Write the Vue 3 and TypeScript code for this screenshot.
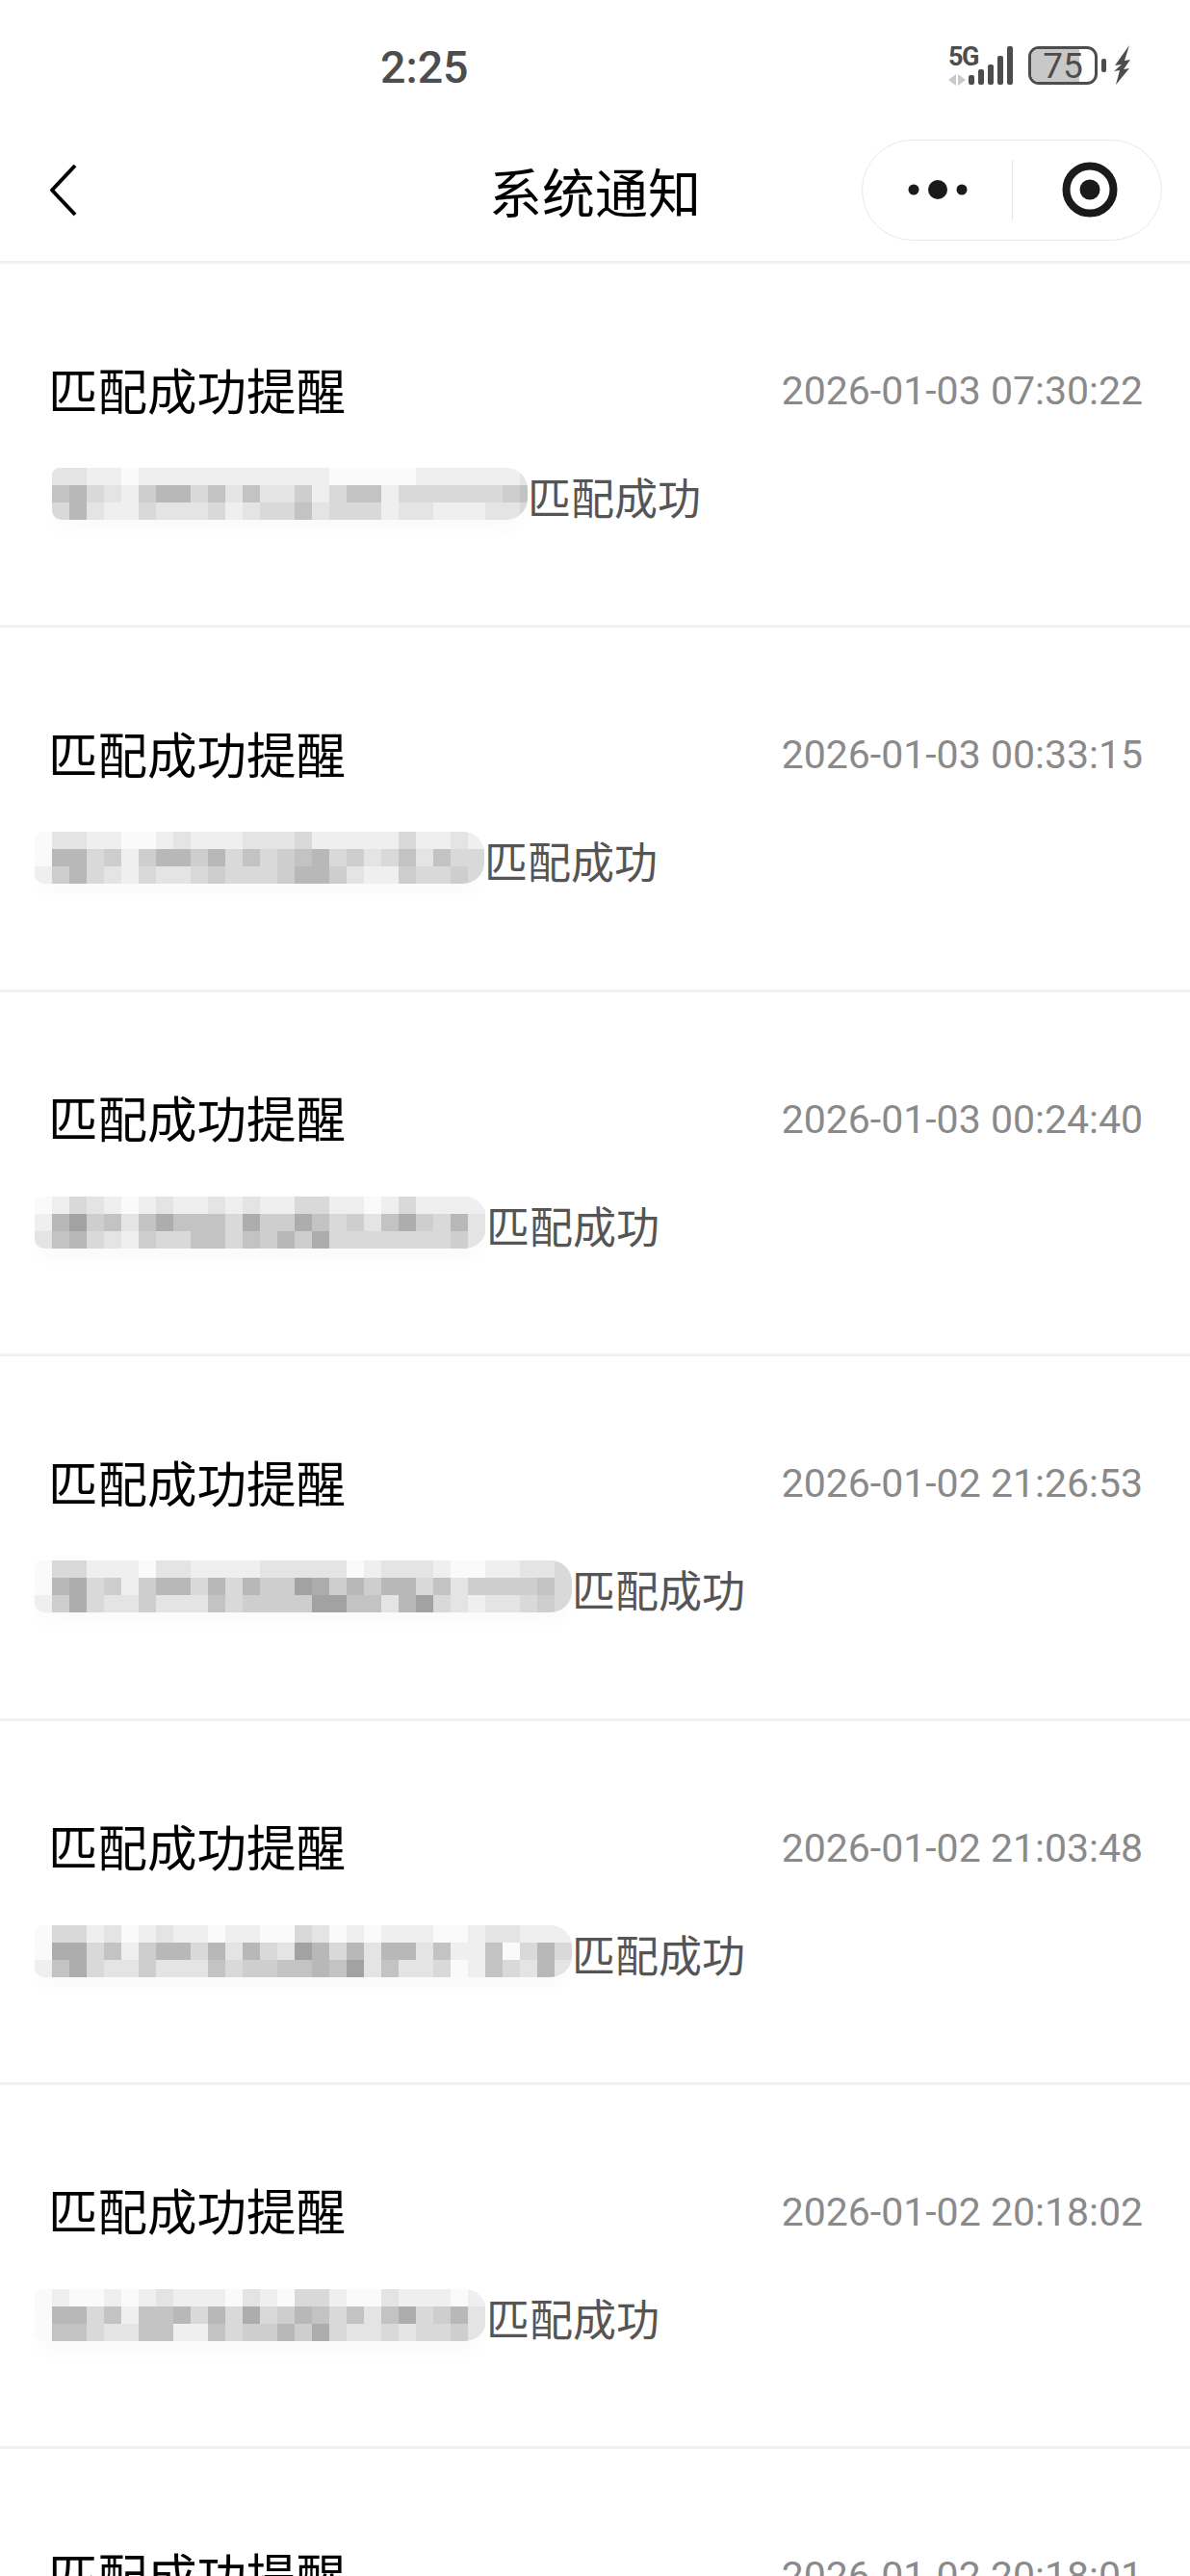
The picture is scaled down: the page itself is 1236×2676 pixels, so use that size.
<script setup lang="ts">
import { computed } from 'vue'

interface Notice {
    time: string
    start: number
    end: number
    mosaic: string[]
}

// each digit is one mosaic cell, 0 = nearly white, 9 = darkest grey
const notices: Notice[] = [
    {
        time: '2026-01-03 07:30:22',
        start: 54,
        end: 548,
        mosaic: [
            '2211011111111111000001111112',
            '5632146635252241355133333345',
            '3621132223123352333122111223',
        ],
    },
    {
        time: '2026-01-03 00:33:15',
        start: 36,
        end: 503,
        mosaic: [
            '02211001211122231111131121',
            '06634146646353456342352533',
            '14632132234333466421143343',
        ],
    },
    {
        time: '2026-01-03 00:24:40',
        start: 36,
        end: 505,
        mosaic: [
            '01321012112121133110131111',
            '16845257555374475342574362',
            '25632143355354647333333342',
        ],
    },
    {
        time: '2026-01-02 21:26:53',
        start: 36,
        end: 594,
        mosaic: [
            '0331110221111222220122210011223',
            '0673414663636448746466352444453',
            '1473224222534444885526832122343',
        ],
    },
    {
        time: '2026-01-02 21:03:48',
        start: 36,
        end: 594,
        mosaic: [
            '0331201211011003201011100122111',
            '0773514663626328636266251150363',
            '1573224222534455658252230153262',
        ],
    },
    {
        time: '2026-01-02 20:18:02',
        start: 36,
        end: 505,
        mosaic: [
            '01001012111021033100211101',
            '06635155636373465352573462',
            '05532255115344647322323342',
        ],
    },
    { time: '2026-01-02 20:18:01', start: 36, end: 36, mosaic: ['', '', ''] },
]

const cellColor = (digit: string) => {
    const value = 250 - Number(digit) * 11
    return `rgb(${value}, ${value}, ${value})`
}

const rows = computed(() =>
    notices.map((notice) => ({
        ...notice,
        cells: notice.mosaic.join('').split('').map(cellColor),
        columns: notice.mosaic[0].length,
    })),
)
</script>

<template>
    <div class="page">
        <div class="status-bar">
            <span class="clock">2:25</span>
            <div class="status-icons">
                <svg class="signal" width="68" height="42" viewBox="0 0 68 42">
                    <text x="0" y="21" class="net">5G</text>
                    <path d="M0 36l8-6v12zM10 30l8 6-8 6z" fill="#c9c9c9" />
                    <rect x="21" y="31" width="6" height="10" rx="2" fill="#4d4d4d" />
                    <rect x="31" y="25" width="6" height="16" rx="2" fill="#4d4d4d" />
                    <rect x="41" y="20" width="6" height="21" rx="2" fill="#4d4d4d" />
                    <rect x="51" y="11" width="6" height="30" rx="2" fill="#4d4d4d" />
                    <rect x="61" y="1" width="6" height="40" rx="2" fill="#4d4d4d" />
                </svg>
                <div class="battery">
                    <div class="battery-fill"></div>
                    <span class="battery-level">75</span>
                </div>
                <span class="battery-nub"></span>
                <svg class="bolt" width="18" height="42" viewBox="0 0 18 42">
                    <path d="M16 0L1 21l7-1-8 7 6-1-4 15 14-17-6 1 7-10-6 1z" fill="#4d4d4d" />
                </svg>
            </div>
        </div>

        <header class="nav-bar">
            <svg class="back" width="32" height="56" viewBox="0 0 32 56" fill="none">
                <path d="M28 2L4 27.5 28 53" stroke="#000" stroke-width="4" stroke-linejoin="round" />
            </svg>
            <h1 class="nav-title">系统通知</h1>
            <div class="capsule">
                <div class="capsule-more">
                    <svg width="66" height="24" viewBox="0 0 66 24">
                        <circle cx="8" cy="12" r="5.5" fill="#1a1a1a" />
                        <circle cx="33" cy="12" r="10" fill="#1a1a1a" />
                        <circle cx="58" cy="12" r="5.5" fill="#1a1a1a" />
                    </svg>
                </div>
                <span class="capsule-line"></span>
                <div class="capsule-target">
                    <svg width="58" height="58" viewBox="0 0 58 58" fill="none">
                        <circle cx="29" cy="29" r="24.5" stroke="#1a1a1a" stroke-width="8" />
                        <circle cx="29" cy="29" r="10.5" fill="#1a1a1a" />
                    </svg>
                </div>
            </div>
        </header>

        <ul class="notice-list">
            <li v-for="row in rows" :key="row.time" class="notice">
                <div class="notice-head">
                    <span class="notice-title">匹配成功提醒</span>
                    <span class="notice-time">{{ row.time }}</span>
                </div>
                <div class="notice-body">
                    <div class="mosaic"
                        :style="{ gridTemplateColumns: `repeat(${row.columns}, 18px)`, width: `${row.end - row.start}px`, marginLeft: `${row.start - 36}px` }">
                        <i v-for="(color, i) in row.cells" :key="i" :style="{ background: color }"></i>
                    </div>
                    <span class="notice-text">匹配成功</span>
                </div>
            </li>
        </ul>
    </div>
</template>

<style scoped>
.page {
    height: 2676px;
    overflow: hidden;
    background: #fff;
    font-family: "Liberation Sans", "Noto Sans CJK SC", sans-serif;
}

.status-bar {
    display: flex;
    align-items: flex-start;
    justify-content: flex-end;
    position: relative;
    height: 131px;
    padding: 47px 61px 0 0;
    box-sizing: border-box;
}

.clock {
    position: absolute;
    left: 395px;
    top: 44px;
    font-family: Roboto, sans-serif;
    font-size: 46.5px;
    line-height: 52px;
    font-weight: 500;
    color: #4d4d4d;
}

.status-icons {
    display: flex;
    align-items: center;
    height: 42px;
}

.net {
    font-family: Roboto, sans-serif;
    font-size: 27px;
    font-weight: 700;
    letter-spacing: -1.5px;
    fill: #4d4d4d;
}

.signal {
    margin-right: 15px;
}

.battery {
    position: relative;
    width: 72px;
    height: 40px;
    box-sizing: border-box;
    border: 3px solid #4d4d4d;
    border-radius: 11px;
    overflow: hidden;
}

.battery-fill {
    width: 75%;
    height: 100%;
    background: #c8c8c8;
}

.battery-level {
    position: absolute;
    inset: 0;
    text-align: center;
    font-family: Roboto, sans-serif;
    font-size: 37px;
    line-height: 35px;
    color: #4d4d4d;
}

.battery-nub {
    width: 5px;
    height: 14px;
    margin: 0 8px 0 4px;
    border-radius: 2px;
    background: #4d4d4d;
}

.nav-bar {
    display: flex;
    align-items: center;
    position: relative;
    height: 143px;
    box-sizing: border-box;
    padding: 0 29px 8px 50px;
    border-bottom: 3px solid #f1f1f1;
}

.back {
    flex: none;
    margin-top: 2px;
}

.nav-title {
    position: absolute;
    left: 0;
    right: 0;
    margin: 0;
    text-align: center;
    font-size: 55px;
    font-weight: 400;
    color: #000;
    pointer-events: none;
}

.capsule {
    display: flex;
    align-items: center;
    margin-left: auto;
    width: 312px;
    height: 105px;
    box-sizing: border-box;
    border: 1px solid #e8e8e8;
    border-radius: 53px;
}

.capsule-more {
    flex: none;
    width: 155px;
    display: flex;
    align-items: center;
    justify-content: center;
}

.capsule-target {
    flex: 1;
    display: flex;
    align-items: center;
    justify-content: center;
    padding-left: 6px;
}

.capsule-line {
    width: 1px;
    height: 63px;
    background: #e6e6e6;
}

.notice-list {
    margin: 0;
    padding: 0;
    list-style: none;
}

.notice {
    height: 378.4px;
    box-sizing: border-box;
    padding: 99px 49px 0 50px;
    border-bottom: 3px solid #f1f1f1;
}

.notice-head {
    display: flex;
    align-items: center;
    justify-content: space-between;
    height: 60px;
}

.notice-title {
    font-size: 51.5px;
    color: #000;
}

.notice-time {
    margin-top: 6px;
    font-family: Roboto, sans-serif;
    font-size: 41px;
    color: #8a8a8a;
}

.notice-body {
    display: flex;
    align-items: flex-start;
    margin-top: 53px;
    margin-left: -14px;
}

.mosaic {
    display: grid;
    grid-auto-rows: 18px;
    overflow: hidden;
    border-radius: 8px 22px 22px 10px;
    box-shadow: 0 16px 16px -4px rgba(0, 0, 0, 0.02);
}

.notice-text {
    margin-top: 7px;
    font-size: 45px;
    line-height: 54px;
    color: #555;
}
</style>

<style>
html,
body {
    overflow: hidden;
    background: #fff;
}
</style>
